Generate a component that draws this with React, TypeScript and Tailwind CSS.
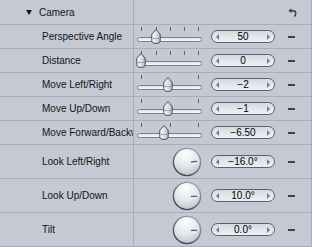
import type { ReactNode } from "react";

type SliderRow = { label: string; value: string; thumb: number; ticks: number[] };

// thumb / tick positions are measured from the left of the track (px)
const sliderRows: SliderRow[] = [
  { label: "Perspective Angle", value: "50", thumb: 18.5, ticks: [4, 18.5, 33, 47, 61] },
  { label: "Distance", value: "0", thumb: 4, ticks: [4, 18.5, 33, 47, 61] },
  { label: "Move Left/Right", value: "\u22122", thumb: 31, ticks: [4, 61] },
  { label: "Move Up/Down", value: "\u22121", thumb: 31, ticks: [4, 61] },
  { label: "Move Forward/Backward", value: "\u22126.50", thumb: 27, ticks: [4, 33, 61] },
];

const dialRows = [
  { label: "Look Left/Right", value: "\u221216.0\u00b0", angle: -6 },
  { label: "Look Up/Down", value: "10.0\u00b0", angle: 0 },
  { label: "Tilt", value: "0.0\u00b0", angle: 0 },
];

function Thumb() {
  return (
    <svg width="10" height="15" viewBox="0 0 10 15">
      <defs>
        <linearGradient id="thumbFill" x1="0" y1="0" x2="1" y2="0">
          <stop offset="0" stopColor="#fbfbfc" />
          <stop offset="0.6" stopColor="#d9dce1" />
          <stop offset="1" stopColor="#a9aeb7" />
        </linearGradient>
      </defs>
      <path
        d="M5 0.6 L9.2 5.2 V11.8 Q9.2 14.4 5 14.4 Q0.8 14.4 0.8 11.8 V5.2 Z"
        fill="url(#thumbFill)"
        stroke="#4a4f59"
        strokeWidth="1"
      />
      <path d="M1.5 9.5 H8.5" stroke="#9ca1aa" strokeWidth="1" />
    </svg>
  );
}

function Slider({ thumb, ticks }: { thumb: number; ticks: number[] }) {
  return (
    <div className="relative h-[23px] w-[65px]">
      {ticks.map((t) => (
        <div
          key={t}
          className="absolute top-[2px] h-[4px] w-[1px] bg-[#5d626c]"
          style={{ left: t }}
        />
      ))}
      <div className="absolute left-0 right-0 top-[12px] h-[5px] rounded-full border border-[#7b808a] bg-gradient-to-b from-[#dfe2e7] to-[#fafbfc]" />
      <div className="absolute top-[4px]" style={{ left: thumb - 5 }}>
        <Thumb />
      </div>
    </div>
  );
}

function Dial({ angle }: { angle: number }) {
  return (
    <svg width="30" height="30" viewBox="0 0 30 30">
      <defs>
        <radialGradient id="dialFill" cx="0.45" cy="0.2" r="0.85">
          <stop offset="0" stopColor="#fdfdfe" />
          <stop offset="0.55" stopColor="#e3e6eb" />
          <stop offset="1" stopColor="#b8bdc6" />
        </radialGradient>
        <linearGradient id="dialRing" x1="0.8" y1="0" x2="0.2" y2="1">
          <stop offset="0" stopColor="#a3a8b2" />
          <stop offset="1" stopColor="#383d46" />
        </linearGradient>
      </defs>
      <circle cx="15" cy="15" r="13.6" fill="url(#dialFill)" stroke="url(#dialRing)" strokeWidth="1.4" />
      <g transform={`rotate(${angle} 15 15)`}>
        <path d="M19.5 15.5 H24.5" stroke="#5a5f69" strokeWidth="1.4" strokeLinecap="round" />
        <path d="M19.5 17 H24.5" stroke="#ffffff" strokeWidth="1" strokeLinecap="round" />
      </g>
    </svg>
  );
}

function ValueField({ value }: { value: string }) {
  return (
    <div className="flex h-[13px] w-[64px] items-center justify-between rounded-full border border-[#5b606a] bg-gradient-to-b from-[#d6dae1] to-[#eef0f4] px-[4px]">
      <span className="h-0 w-0 border-y-[3px] border-r-[3px] border-y-transparent border-r-[#767b85]" />
      <span className="text-[10px] leading-none text-black">{value}</span>
      <span className="h-0 w-0 border-y-[3px] border-l-[3px] border-y-transparent border-l-[#767b85]" />
    </div>
  );
}

function Row({ label, height, children }: { label: string; height: string; children: ReactNode }) {
  return (
    <div className={`flex border-b border-[#a7adba] ${height}`}>
      <div className="flex w-[134px] shrink-0 items-center overflow-hidden whitespace-nowrap border-r border-[#a7adba] pl-[42px] text-[10px] text-[#141414]">
        {label}
      </div>
      <div className="flex flex-1 items-center border-r border-[#a7adba] pl-[3px]">{children}</div>
    </div>
  );
}

export default function App() {
  return (
    <div
      className="h-[247px] w-[312px] overflow-hidden bg-[#c4c9d3]"
      style={{ fontFamily: '"Liberation Sans", Arial, sans-serif' }}
    >
      <div className="flex h-[25px] border-b border-[#a7adba]">
        <div className="flex w-[134px] shrink-0 items-center border-r border-[#a7adba] pl-[26px] text-[10px] text-[#141414]">
          <span className="mr-[7px] h-0 w-0 border-x-[3px] border-t-[5px] border-x-transparent border-t-[#1a1a1a]" />
          Camera
        </div>
        <div className="flex flex-1 items-center justify-end border-r border-[#a7adba] pr-[14px]">
          <svg width="9" height="9" viewBox="0 0 9 9">
            <path d="M0.5 2.8 L3.4 0.3 V5.3 Z" fill="#3c4049" />
            <path d="M3 2.8 H5 Q7.8 2.8 7.8 5.4 Q7.8 7.4 6.2 8.4" fill="none" stroke="#3c4049" strokeWidth="1.4" />
          </svg>
        </div>
      </div>

      {sliderRows.map((r) => (
        <Row key={r.label} label={r.label} height="h-[24px]">
          <Slider thumb={r.thumb} ticks={r.ticks} />
          <div className="ml-[9px]">
            <ValueField value={r.value} />
          </div>
          <div className="ml-[13px] h-[2px] w-[7px] bg-[#3f434b]" />
        </Row>
      ))}

      {dialRows.map((r) => (
        <Row key={r.label} label={r.label} height="h-[34px]">
          <div className="flex w-[65px] justify-end pr-[0px]">
            <Dial angle={r.angle} />
          </div>
          <div className="ml-[9px]">
            <ValueField value={r.value} />
          </div>
          <div className="ml-[13px] h-[2px] w-[7px] bg-[#3f434b]" />
        </Row>
      ))}
    </div>
  );
}
